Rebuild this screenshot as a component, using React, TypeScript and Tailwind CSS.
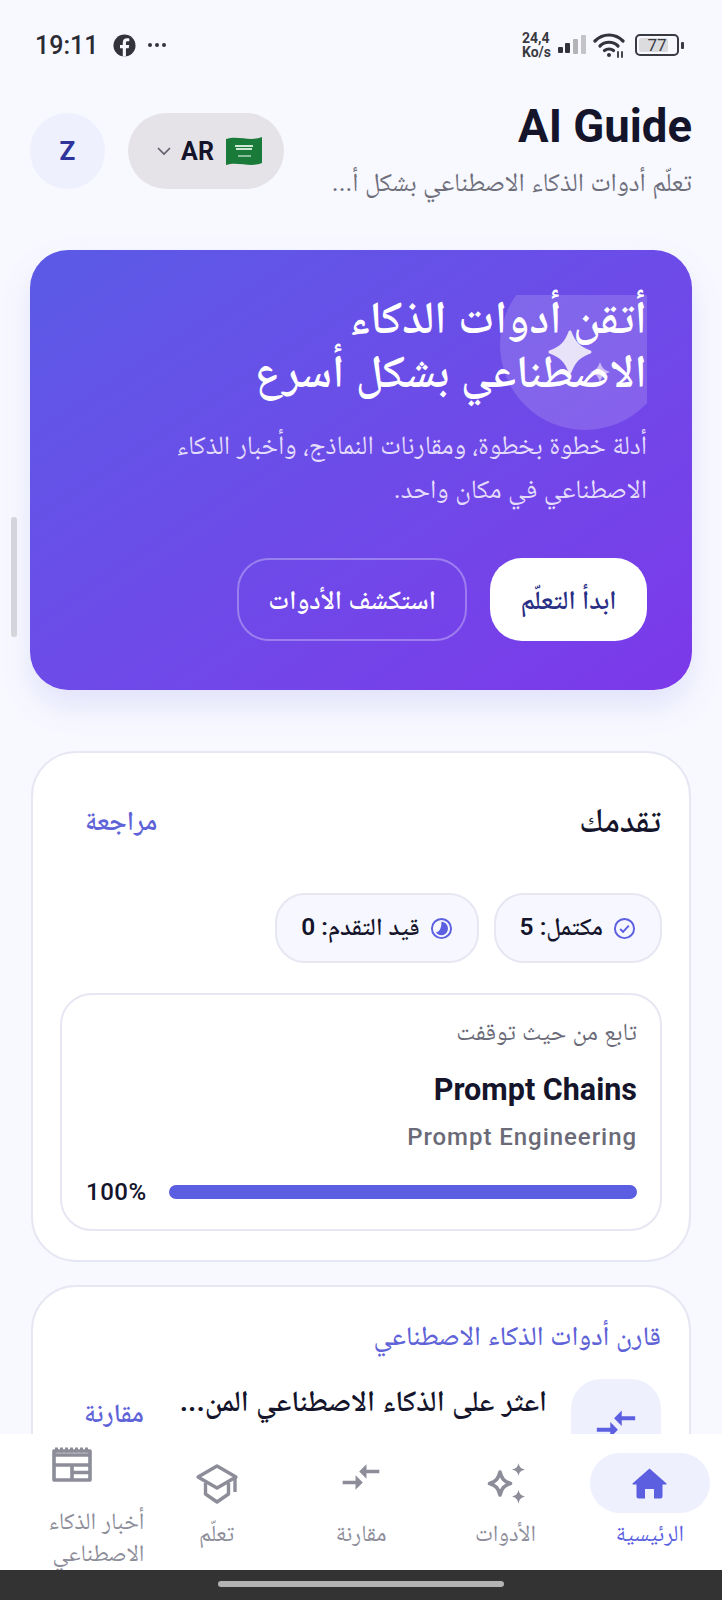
import React from "react";

const ar = { fontFamily: 'Roboto, "Noto Naskh Arabic", "DejaVu Sans", sans-serif' };

function Compare({ className }: { className?: string }) {
  return (
    <svg viewBox="0 0 24 24" fill="currentColor" className={className}>
      <path d="M9.01 14H2v2h7.01v3L13 15l-3.99-4v3zm5.98-1v-3H22V8h-7.01V5L11 9l3.99 4z" />
    </svg>
  );
}

function Sparkles({ className }: { className?: string }) {
  return (
    <svg viewBox="0 0 39 41" className={className}>
      <path d="M14 9 C15.500 15.500 18 18.500 24.500 20.500 C18 22.500 15.500 25.500 14 32 C12.500 25.500 10 22.500 3.500 20.500 C10 18.500 12.500 15.500 14 9 Z" fill="none" stroke="currentColor" strokeWidth="3.600" strokeLinejoin="round" />
      <path d="M32.500 0 C33.300 4 34.800 5.500 39 6.500 C34.800 7.500 33.300 9 32.500 13 C31.700 9 30.200 7.500 26 6.500 C30.200 5.500 31.700 4 32.500 0 Z" fill="currentColor" />
      <path d="M32.500 26.500 C33.300 30.500 34.800 32.500 39 33.500 C34.800 34.500 33.300 36.500 32.500 41 C31.700 36.500 30.200 34.500 26 33.500 C30.200 32.500 31.700 30.500 32.500 26.500 Z" fill="currentColor" />
    </svg>
  );
}

function NavItem({ label, icon, active }: { label: React.ReactNode; icon: React.ReactNode; active?: boolean }) {
  return (
    <div className="flex flex-col items-center w-[144.400px] shrink-0 min-w-0">
      <div className={`h-[60px] w-[120px] rounded-[30px] flex items-center justify-center ${active ? "bg-[#eef0fd]" : ""}`}>{icon}</div>
      <div style={ar} className={`text-[23px] leading-[44px] -mt-[1px] text-center ${active ? "text-[#5b5fe0]" : "text-[#8d8d9a]"}`}>{label}</div>
    </div>
  );
}

export default function App() {
  return (
    <div dir="rtl" className="relative h-[1600px] w-[722px] overflow-hidden bg-[#f8f9ff]" style={{ fontFamily: "Roboto, sans-serif" }}>
      {/* status bar */}
      <div dir="ltr" className="h-[92px] flex items-center justify-between pl-[35px] pr-[38px] pb-[2px] text-[#2b2b33]">
        <div className="flex items-center">
          <span className="text-[25px] font-medium leading-none">19:11</span>
          <svg viewBox="0 0 24 24" className="w-[23px] h-[23px] ml-[15px]">
            <circle cx="12" cy="12" r="11.500" fill="#33333b" />
            <path d="M13.500 23.500v-8.700h2.900l.5-3.400h-3.400V9.300c0-1 .4-1.700 1.800-1.700h1.700V4.700c-.8-.1-1.700-.2-2.500-.2-2.600 0-4.300 1.600-4.300 4.400v2.500H7.300v3.400h2.900v8.700z" fill="#f8f9ff" />
          </svg>
          <span className="flex gap-[3px] ml-[12px]">
            <i className="w-[4px] h-[4px] rounded-full bg-[#33333b]" />
            <i className="w-[4px] h-[4px] rounded-full bg-[#33333b]" />
            <i className="w-[4px] h-[4px] rounded-full bg-[#33333b]" />
          </span>
        </div>
        <div className="flex items-center">
          <div className="text-[14px] font-bold leading-[14px] text-[#3a3a42] text-left">
            24,4
            <br />
            Ko/s
          </div>
          <svg viewBox="0 0 30 20" className="w-[30px] h-[20px] ml-[7px]">
            <rect x="0" y="12" width="5" height="6" rx="1" fill="#33333b" />
            <rect x="7" y="8" width="5" height="10" rx="1" fill="#33333b" />
            <rect x="15" y="4" width="5" height="15" rx="1" fill="#b4b4b8" />
            <rect x="23" y="0" width="5" height="19" rx="1" fill="#c4c4c8" />
          </svg>
          <svg viewBox="0 0 34 26" className="w-[34px] h-[26px] ml-[5px]" fill="none" stroke="#33333b" strokeWidth="3.200" strokeLinecap="round">
            <path d="M2 9 C10 1 22 1 30 9" />
            <path d="M7 14 C12 9 20 9 25 14" />
            <path d="M11.500 18.500 C14 16.500 18 16.500 20.500 18.500" />
            <circle cx="16" cy="23" r="2" fill="#33333b" stroke="none" />
            <path d="M25 20v5M29 20v5" strokeWidth="1.800" />
          </svg>
          <div className="ml-[8px] w-[44px] h-[22px] rounded-[5px] border-2 border-[#3a3a42] p-[2px] relative flex items-center">
            <div className="absolute left-[2px] top-[2px] bottom-[2px] w-[29px] rounded-[2px] bg-[#dcdcdf]" />
            <span className="relative w-full text-center text-[17px] leading-none text-[#3a3a42]">77</span>
          </div>
          <div className="w-[3px] h-[7px] ml-[2px] rounded-[1px] bg-[#3a3a42]" />
        </div>
      </div>

      {/* header */}
      <div className="px-[30px] flex items-start justify-between h-[158px]">
        <div className="pt-[12px] min-w-0">
          <div dir="ltr" className="text-right text-[45.500px] font-bold leading-[46px] text-[#14142b]">AI Guide</div>
          <div style={ar} className="text-[26px] leading-[32px] mt-[16px] text-[#6f6f7c] whitespace-nowrap">تعلّم أدوات الذكاء الاصطناعي بشكل أ...</div>
        </div>
        <div dir="ltr" className="flex items-center gap-[23px] pt-[21px] shrink-0" style={{ order: 1 }}>
          <div className="w-[75px] h-[76px] rounded-full bg-[#eef0fd] flex items-center justify-center text-[26px] font-bold text-[#2f339c]">Z</div>
          <div className="w-[156px] h-[76px] rounded-[38px] bg-[#e6e3e8] flex items-center justify-center gap-[10px] pl-[8px]">
            <svg viewBox="0 0 14 9" className="w-[14px] h-[9px]" fill="none" stroke="#5f5f6b" strokeWidth="1.600"><path d="M1 1l6 6 6-6" /></svg>
            <span className="text-[25px] font-bold leading-[32px] mt-[1px] text-[#14142b]">AR</span>
            <svg viewBox="0 0 36 36" className="w-[38px] h-[36px] ml-[1px]">
              <path d="M0 6 C12 2 24 9 36 4 V30 C24 35 12 28 0 32 Z" fill="#1a7a3a" />
              <path d="M9 13 H27 M10 16 H26" stroke="#cfe6d4" strokeWidth="2.200" />
              <path d="M12 23 H25" stroke="#d8ecdc" strokeWidth="1.200" />
            </svg>
          </div>
        </div>
      </div>

      {/* hero */}
      <div className="mx-[30px] h-[440px] rounded-[38px] bg-gradient-to-br from-[#5a5ae6] to-[#7c38ea] shadow-[0_16px_32px_rgba(90,90,220,0.14)] px-[45px] pt-[40px] relative overflow-hidden">
        <div className="absolute right-[45px] top-[45px] w-[147px] h-[135px] overflow-hidden">
          <div className="absolute left-0 bottom-0 w-[170px] h-[170px] rounded-full bg-white/15" />
          <svg viewBox="0 0 147 135" className="absolute inset-0 w-[147px] h-[135px]">
            <path d="M70 37 C74 48 79 53 90 57 C79 61 74 66 70 77 C66 66 61 61 50 57 C61 53 66 48 70 37 Z" fill="#e9e3fa" stroke="#e9e3fa" strokeWidth="3" strokeLinejoin="round" />
            <path d="M100 67 C102 73 104 75 110 77 C104 79 102 81 100 87 C98 81 96 79 90 77 C96 75 98 73 100 67 Z" fill="#cbbcf6" />
          </svg>
        </div>
        <div style={ar} className="relative text-[46px] leading-[54px] font-semibold text-white">
          أتقن أدوات الذكاء
          <br />
          الاصطناعي بشكل أسرع
        </div>
        <div style={ar} className="relative text-[26.400px] leading-[44px] mt-[25px] text-[#e4dcfb]">
          أدلة خطوة بخطوة، ومقارنات النماذج، وأخبار الذكاء
          <br />
          الاصطناعي في مكان واحد.
        </div>
        <div className="relative flex gap-[23px] mt-[47px]">
          <div style={ar} className="w-[157px] h-[83px] rounded-[32px] bg-white flex items-center justify-center text-[26.500px] font-semibold text-[#2a2f86]">ابدأ التعلّم</div>
          <div style={ar} className="w-[230px] h-[83px] rounded-[32px] border-2 border-white/30 flex items-center justify-center text-[26.500px] font-semibold text-white">استكشف الأدوات</div>
        </div>
      </div>

      {/* progress card */}
      <div className="mx-[31px] mt-[61px] h-[511px] rounded-[45px] bg-white border-2 border-[#e6e7f2] px-[27px]">
        <div className="flex items-center justify-between pt-[37px] h-[100px]">
          <div style={ar} className="text-[33.500px] mr-[1px] font-semibold text-[#14142b]">تقدمك</div>
          <div style={ar} className="text-[27px] font-semibold text-[#5f63d8] ml-[25px]">مراجعة</div>
        </div>
        <div className="flex gap-[15px] mt-[40px]">
          <div className="h-[70px] px-[24px] rounded-[30px] bg-[#f7f8ff] border-2 border-[#e6e7f2] flex items-center gap-[10px]">
            <svg viewBox="0 0 24 24" className="w-[23px] h-[23px]" fill="none" stroke="#5b5fe0" strokeWidth="2"><circle cx="12" cy="12" r="10" /><path d="M7.500 12.500l3 3 6-6.500" /></svg>
            <span style={ar} className="text-[24.500px] font-semibold leading-[36px] -mt-[3px] text-[#14142b]">مكتمل: 5</span>
          </div>
          <div className="h-[70px] px-[24px] rounded-[30px] bg-[#f7f8ff] border-2 border-[#e6e7f2] flex items-center gap-[10px]">
            <svg viewBox="0 0 24 24" className="w-[23px] h-[23px]" fill="none" stroke="#5b5fe0" strokeWidth="2"><circle cx="12" cy="12" r="10" /><path d="M12 5 A7 7 0 1 1 6 16 C9 16 12 13 12 5 Z" fill="#5b5fe0" stroke="none" /></svg>
            <span style={ar} className="text-[24.500px] font-semibold leading-[36px] -mt-[3px] text-[#14142b]">قيد التقدم: 0</span>
          </div>
        </div>
        <div className="mt-[30px] h-[238px] rounded-[32px] border-2 border-[#e6e7f2] pl-[24px] pr-[23px] pt-[22px]">
          <div style={ar} className="text-[24.500px] leading-[30px] text-[#6a6a78]">تابع من حيث توقفت</div>
          <div dir="ltr" className="text-right text-[30.500px] font-bold leading-[36px] mt-[25px] text-[#14142b]">Prompt Chains</div>
          <div dir="ltr" className="text-right text-[24px] font-medium tracking-[0.95px] leading-[30px] mt-[14px] text-[#6b6b78]">Prompt Engineering</div>
          <div dir="ltr" className="flex items-center gap-[22px] mt-[25px]">
            <span className="text-[24px] font-medium tracking-[0.5px] leading-[30px] text-[#14142b]">100%</span>
            <div className="flex-1 h-[14px] rounded-full bg-[#5b5ee0]" />
          </div>
        </div>
      </div>

      {/* compare card */}
      <div className="mx-[31px] mt-[23px] h-[300px] rounded-[45px] bg-white border-2 border-[#e6e7f2] px-[28px] pt-[31px]">
        <div style={ar} className="text-[27px] leading-[36px] font-medium text-[#5f63d8]">قارن أدوات الذكاء الاصطناعي</div>
        <div className="flex items-start mt-[25px]">
          <div className="w-[90px] h-[90px] rounded-[30px] bg-[#eef0fd] flex items-center justify-center shrink-0">
            <Compare className="w-[46px] h-[46px] text-[#5b5fe0]" />
          </div>
          <div style={ar} className="mr-[24px] text-[29.400px] font-semibold leading-[44px] text-[#14142b] whitespace-nowrap">اعثر على الذكاء الاصطناعي المن...</div>
          <div style={ar} className="mr-auto ml-[23px] mt-[14px] text-[26.500px] font-semibold text-[#5f63d8]">مقارنة</div>
        </div>
      </div>

      {/* bottom nav: fixed over the page */}
      <div className="absolute left-0 right-0 bottom-0">
        <div className="h-[136px] bg-white flex items-start overflow-hidden">
          <div className="flex pt-[19px]">
            <NavItem active label="الرئيسية" icon={<svg viewBox="0 0 35 31" className="w-[35px] h-[31px] text-[#5b5fe0]" fill="currentColor"><path d="M17.500 0.500 L34.500 15.500 Q35 16.500 34 16.500 H30.500 V28.500 a2 2 0 0 1 -2 2 H22 V21 H13 V30.500 H6.500 a2 2 0 0 1 -2 -2 V16.500 H1 Q0 16.500 0.500 15.500 Z" /></svg>} />
            <NavItem label="الأدوات" icon={<Sparkles className="w-[39px] h-[41px] text-[#8d8d9a]" />} />
            <NavItem label="مقارنة" icon={<Compare className="w-[44px] h-[44px] -mt-[12px] text-[#8d8d9a]" />} />
            <NavItem label="تعلّم" icon={<svg viewBox="0 0 44 44" className="w-[44px] h-[44px] -mt-[2px] text-[#8d8d9a]" fill="none" stroke="currentColor" strokeWidth="3.400" strokeLinejoin="round"><path d="M22 6 3 17l19 11 19-11z" /><path d="M10.500 23v11l11.500 8 11.500-8V23" /><path d="M40 17v15" /></svg>} />
            <div className="w-[144.400px] shrink-0 flex flex-col items-center -mt-[6px]">
              <svg viewBox="0 0 40 35" className="w-[40px] h-[35px] text-[#8d8d9a]" fill="none" stroke="currentColor" strokeWidth="3.600">
                <path d="M2 4h36v29H2z" strokeLinejoin="round" />
                <path d="M2 8h36M2 18h36M20 18v15M20 25.500h18" />
                <path d="M3 3h34" strokeWidth="5" strokeDasharray="3 2" />
              </svg>
              <div style={ar} className="w-full text-[23.500px] leading-[32px] mt-[23px] text-[#8d8d9a] text-right">أخبار الذكاء<br />الاصطناعي</div>
            </div>
          </div>
        </div>
        <div className="h-[30px] bg-[#333333] flex items-center justify-center">
          <div className="w-[286px] h-[6px] rounded-full bg-[#b3b3b3] -mt-[3px]" />
        </div>
      </div>

      {/* scrollbar */}
      <div className="absolute left-[11px] top-[517px] w-[6px] h-[120px] rounded-full bg-[#d3d5da]" />
    </div>
  );
}
